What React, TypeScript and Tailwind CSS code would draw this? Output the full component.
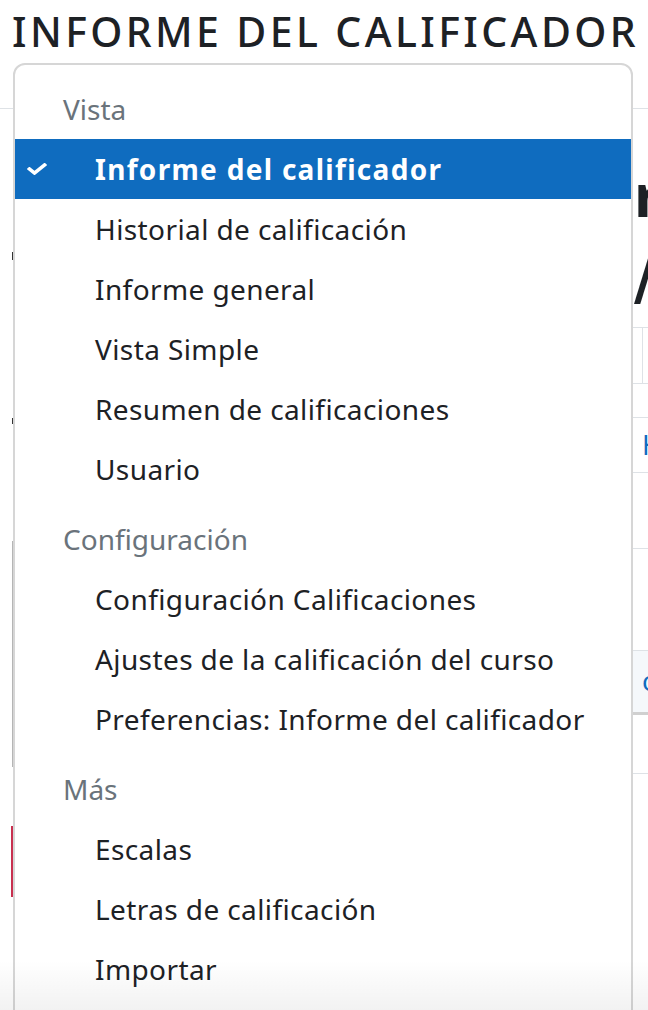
import React from "react";

const font = { fontFamily: '"Noto Sans", "Open Sans", Arial, sans-serif' };

function Check() {
  return (
    <svg viewBox="0 0 512 512" className="w-[20px] h-[16px]" preserveAspectRatio="none" fill="white">
      <path d="M173.898 439.404l-166.4-166.4c-9.997-9.997-9.997-26.206 0-36.204l36.203-36.204c9.997-9.998 26.207-9.998 36.204 0L192 312.69 432.095 72.596c9.997-9.997 26.207-9.997 36.204 0l36.203 36.204c9.997 9.997 9.997 26.206 0 36.204l-294.4 294.401c-9.998 9.997-26.207 9.997-36.204-.001z" />
    </svg>
  );
}

function Header({ children, first }: { children: React.ReactNode; first?: boolean }) {
  return (
    <div className={`h-[60px] flex items-center pl-[48px] text-[28px] text-[#6a737b] ${first ? "" : "mt-[10px]"}`}>
      {children}
    </div>
  );
}

function Item({ children, active }: { children: React.ReactNode; active?: boolean }) {
  if (active) {
    return (
      <div className="h-[60px] flex items-center bg-[#0f6cbf] text-white text-[28px] font-bold tracking-[1.3px]">
        <div className="w-[80px] flex items-center pl-[12px]">
          <Check />
        </div>
        <span>{children}</span>
      </div>
    );
  }
  return (
    <div className="h-[60px] flex items-center pl-[80px] text-[28px] tracking-[0.4px] text-[#1d2125]">{children}</div>
  );
}

export default function App() {
  return (
    <div className="relative w-[648px] h-[1010px] overflow-hidden bg-white" style={font}>
      {/* background page */}
      <div className="flex flex-col">
        <div className="h-[109px] border-b border-[#dee2e6] pl-[12px] pt-[11px]">
          <h1 className="text-[41px] leading-none font-medium text-[#1d2125] tracking-[3.4px] whitespace-nowrap">
            INFORME DEL CALIFICADOR
          </h1>
        </div>
        <div className="flex">
          <div className="w-[13px] flex flex-col items-end">
            <div className="mt-[143px] w-[1px] h-[8px] bg-[#333]" />
            <div className="mt-[158px] w-[1px] h-[6px] bg-[#333]" />
            <div className="mt-[117px] w-[1px] h-[226px] bg-[#b5b5b5]" />
            <div className="mt-[59px] w-[2px] h-[71px] bg-[#c8304f]" />
          </div>
          <div className="flex-1" />
          <div className="w-[15px] flex flex-col overflow-hidden">
            <div className="mt-[55px] h-[60px] leading-none text-[60px] font-bold text-[#1d2125] pl-[1px]">r</div>
            <div
              className="mt-[26px] h-[60px] leading-none text-[58px] font-bold text-[#1d2125] whitespace-nowrap pl-[1px]"
              style={{ fontFamily: '"DejaVu Sans", sans-serif' }}
            >
              /
            </div>
            <div className="mt-[17px] border-t border-[#dee2e6] h-[56px] pl-[9px]">
              <div className="h-full border-l border-[#dee2e6]" />
            </div>
            <div className="border-t border-[#dee2e6] h-[34px]" />
            <div className="border-t border-[#dee2e6] h-[55px] pl-[9px] flex items-center text-[27px] text-[#0f6cbf] overflow-hidden">
              H
            </div>
            <div className="border-t border-[#dee2e6] h-[76px]" />
            <div className="border-t border-[#dee2e6] h-[102px]" />
            <div className="border-t border-[#dee2e6] h-[62px] bg-[#f5f8fb] pl-[9px] flex items-center text-[27px] text-[#0f6cbf] overflow-hidden">
              o
            </div>
            <div className="border-t-[3px] border-[#d0d0d0] h-[61px]" />
            <div className="border-t border-[#dee2e6] h-[100px]" />
          </div>
        </div>
      </div>

      {/* dropdown menu */}
      <div className="absolute left-[13px] top-[63px] w-[620px] h-[1000px] bg-white border-2 border-[#d6d6d6] rounded-[12px]">
        <div className="pt-[14px]">
          <Header first>Vista</Header>
          <Item active>Informe del calificador</Item>
          <Item>Historial de calificación</Item>
          <Item>Informe general</Item>
          <Item>Vista Simple</Item>
          <Item>Resumen de calificaciones</Item>
          <Item>Usuario</Item>
          <Header>Configuración</Header>
          <Item>Configuración Calificaciones</Item>
          <Item>Ajustes de la calificación del curso</Item>
          <Item>Preferencias: Informe del calificador</Item>
          <Header>Más</Header>
          <Item>Escalas</Item>
          <Item>Letras de calificación</Item>
          <Item>Importar</Item>
        </div>
      </div>

      <div className="pointer-events-none absolute left-0 bottom-0 w-full h-[50px] bg-gradient-to-b from-transparent to-[#0000000d]" />
    </div>
  );
}
